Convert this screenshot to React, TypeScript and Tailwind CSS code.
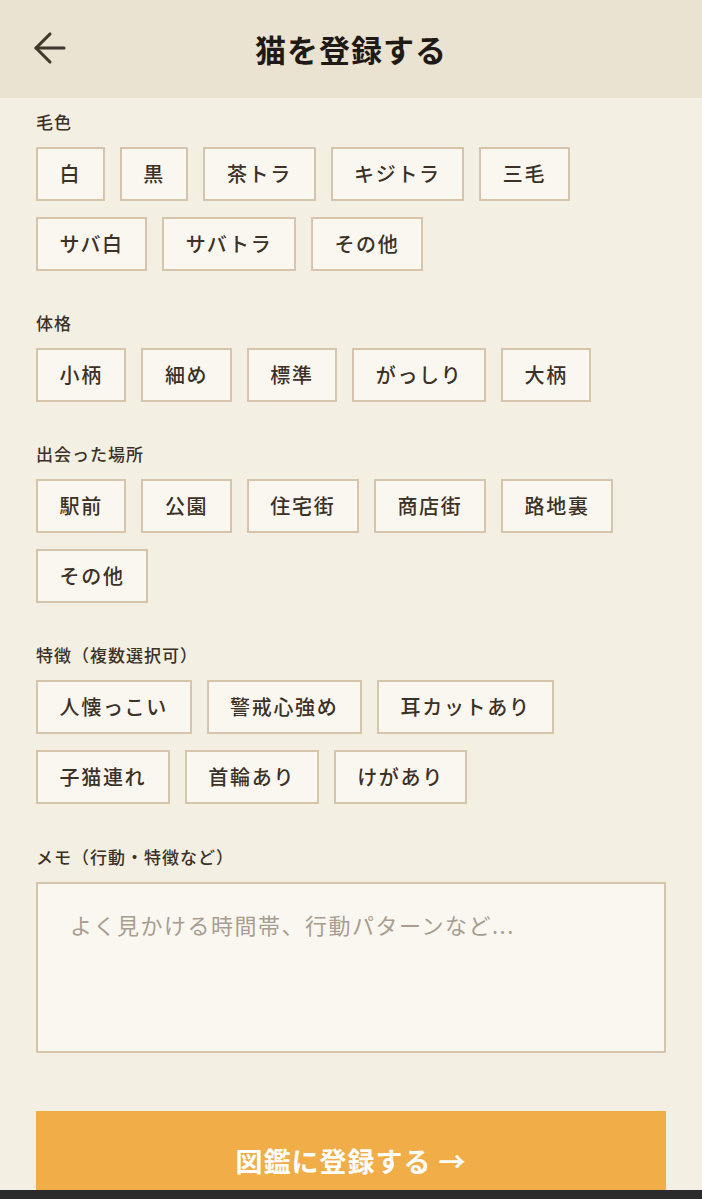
import React from "react";
import { ArrowLeft } from "lucide-react";

const sections: { label: string; items: string[] }[] = [
  { label: "毛色", items: ["白", "黒", "茶トラ", "キジトラ", "三毛", "サバ白", "サバトラ", "その他"] },
  { label: "体格", items: ["小柄", "細め", "標準", "がっしり", "大柄"] },
  { label: "出会った場所", items: ["駅前", "公園", "住宅街", "商店街", "路地裏", "その他"] },
  { label: "特徴（複数選択可）", items: ["人懐っこい", "警戒心強め", "耳カットあり", "子猫連れ", "首輪あり", "けがあり"] },
];

const font = { fontFamily: '"Noto Sans CJK JP", "Noto Sans", sans-serif' };

export default function App() {
  return (
    <div className="min-h-screen bg-[#f3efe2] text-[#3b3127]" style={font}>
      <header className="relative h-[98px] bg-[#eae3d2] flex items-center justify-center">
        <button className="absolute left-[26px] top-[24px] text-[#3f362c]">
          <ArrowLeft size={48} strokeWidth={1.55} />
        </button>
        <h1 className="text-[31px] font-bold tracking-[1px] text-[#1f1a15]">猫を登録する</h1>
      </header>

      <main className="px-9 pt-3 pb-0 flex flex-col">
        {sections.map((s, i) => (
          <section key={s.label} className={i === 0 ? "" : "mt-10"}>
            <div className="text-[17px] leading-[24px] font-medium tracking-[1px] mb-[13px] text-[#3b3127]">
              {s.label}
            </div>
            <div className="flex flex-wrap gap-x-[15px] gap-y-4">
              {s.items.map((it) => (
                <button
                  key={it}
                  className="border-2 border-[#d6c5aa] bg-[#faf7f0] px-[21.5px] py-[10px] text-[20px] leading-[30px] font-medium tracking-[1.7px] text-[#3b3127]"
                >
                  {it}
                </button>
              ))}
            </div>
          </section>
        ))}

        <section className="mt-[41px]">
          <div className="text-[17px] leading-[24px] font-medium tracking-[1px] mb-[13px] text-[#3b3127]">
            メモ（行動・特徴など）
          </div>
          <textarea
            className="block w-full h-[171px] resize-none border-2 border-[#d6c5aa] bg-[#faf7f0] pl-8 pr-6 pt-6 text-[22px] leading-[33px] tracking-[1.5px] outline-none placeholder:text-[#a89d90]"
            style={font}
            placeholder="よく見かける時間帯、行動パターンなど..."
          />
        </section>

        <button className="mt-[58px] h-[100px] w-full bg-[#f0ad48] text-white text-[27px] font-bold tracking-[1px] flex items-center justify-center">
          図鑑に登録する →
        </button>
        <div className="h-10" />
      </main>

      <div className="fixed bottom-0 left-0 right-0 h-[9px] bg-[#2b2b2b]" />
    </div>
  );
}
